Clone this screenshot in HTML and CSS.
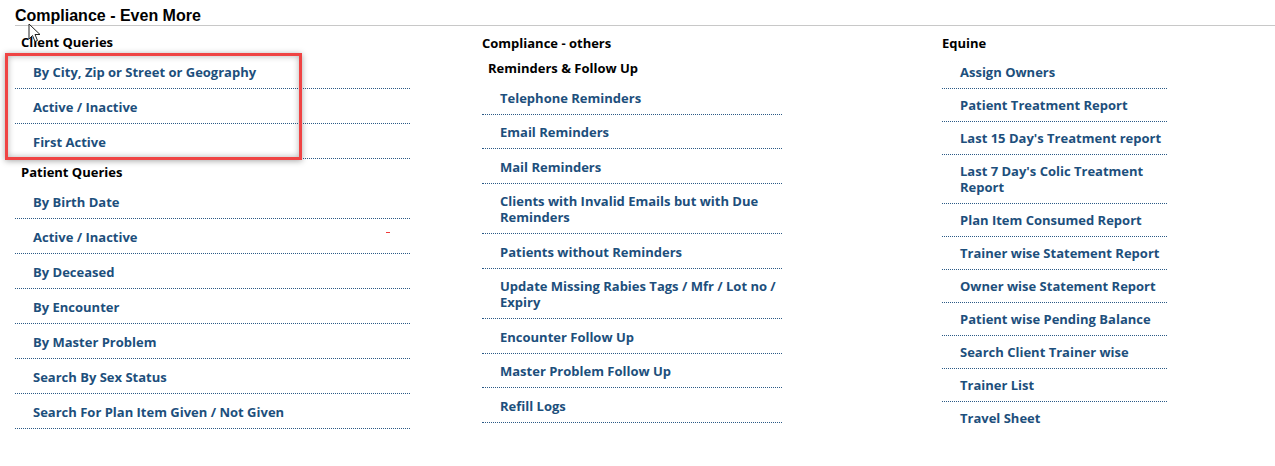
FILE: index.html
```html
<!DOCTYPE html>
<html>
<head>
<meta charset="utf-8">
<link rel="stylesheet" href="styles.css">
</head>
<body>
<div class="page">
  <h1 class="title">Compliance - Even More</h1>
  <div class="columns">
    <div class="col col1">
      <div class="group-title">Client Queries</div>
      <ul class="links">
        <li>By City, Zip or Street or Geography</li>
        <li>Active / Inactive</li>
        <li>First Active</li>
      </ul>
      <div class="group-title">Patient Queries</div>
      <ul class="links">
        <li>By Birth Date</li>
        <li class="has-mark">Active / Inactive<span class="mark"></span></li>
        <li>By Deceased</li>
        <li>By Encounter</li>
        <li>By Master Problem</li>
        <li>Search By Sex Status</li>
        <li>Search For Plan Item Given / Not Given</li>
      </ul>
    </div>
    <div class="col col2">
      <div class="col-title">Compliance - others</div>
      <div class="group-title">Reminders &amp; Follow Up</div>
      <ul class="links">
        <li>Telephone Reminders</li>
        <li>Email Reminders</li>
        <li>Mail Reminders</li>
        <li>Clients with Invalid Emails but with Due Reminders</li>
        <li>Patients without Reminders</li>
        <li>Update Missing Rabies Tags / Mfr / Lot no / Expiry</li>
        <li>Encounter Follow Up</li>
        <li>Master Problem Follow Up</li>
        <li>Refill Logs</li>
      </ul>
    </div>
    <div class="col col3">
      <div class="col-title">Equine</div>
      <ul class="links compact">
        <li>Assign Owners</li>
        <li>Patient Treatment Report</li>
        <li>Last 15 Day's Treatment report</li>
        <li>Last 7 Day's Colic Treatment Report</li>
        <li>Plan Item Consumed Report</li>
        <li>Trainer wise Statement Report</li>
        <li>Owner wise Statement Report</li>
        <li>Patient wise Pending Balance</li>
        <li>Search Client Trainer wise</li>
        <li>Trainer List</li>
        <li class="last">Travel Sheet</li>
      </ul>
    </div>
  </div>
  <div class="highlight"></div>
  <svg class="cursor" width="14" height="20" viewBox="0 0 14 20"><path d="M1 1 L1 16 L4.5 12.5 L7 18.5 L9.5 17.5 L7 11.5 L12 11.5 Z" fill="#fff" stroke="#222" stroke-width="1" stroke-linejoin="round"/></svg>
</div>
</body>
</html>
```
FILE: styles.css
```css
html, body {
  margin: 0;
  padding: 0;
  background: #fff;
}
.page {
  position: relative;
  width: 1275px;
  height: 466px;
  overflow: hidden;
}
.title {
  margin: 0 0 0 15px;
  font-family: "Liberation Sans", Arial, sans-serif;
  font-weight: bold;
  font-size: 16px;
  line-height: 18px;
  padding-top: 7px;
  height: 18px;
  color: #000;
  border-bottom: 1px solid #c8c8c8;
}
.columns {
  display: grid;
  grid-template-columns: 467px 460px 225px;
  padding-left: 15px;
  padding-top: 3px;
  font-family: "Open Sans", "DejaVu Sans", sans-serif;
  font-size: 13px;
  line-height: 16px;
}
.col1 { width: 395px; }
.col2 { width: 300px; }
.col3 { width: 225px; }
.col-title {
  font-weight: 700;
  color: #000;
  padding: 6px 0 4px 0;
}
.col3 .col-title { padding-bottom: 5px; }
.group-title {
  font-weight: 700;
  color: #000;
  padding: 5px 0 4px 6px;
}
.links {
  list-style: none;
  margin: 0;
  padding: 0;
}
.links li {
  position: relative;
  padding: 10px 0 8px 18px;
  color: #1d4f7c;
  font-weight: 700;
  border-bottom: 1px dotted #2b5a86;
}
.links.compact li {
  padding: 8px 0 8px 18px;
}
.links li.last { border-bottom: none; }
.col2 .links li { padding: 9.5px 4px 8px 18px; }
.mark {
  position: absolute;
  left: 371px;
  top: 13px;
  width: 4px;
  height: 1px;
  background: #f03a3a;
}
.highlight {
  position: absolute;
  left: 5px;
  top: 53px;
  width: 291px;
  height: 101px;
  border: 3px solid #ef4444;
  box-shadow: 0 1px 6px rgba(0,0,0,0.35), inset 0 0 6px rgba(0,0,0,0.3);
  pointer-events: none;
}
.cursor {
  position: absolute;
  left: 28px;
  top: 23px;
}
```
